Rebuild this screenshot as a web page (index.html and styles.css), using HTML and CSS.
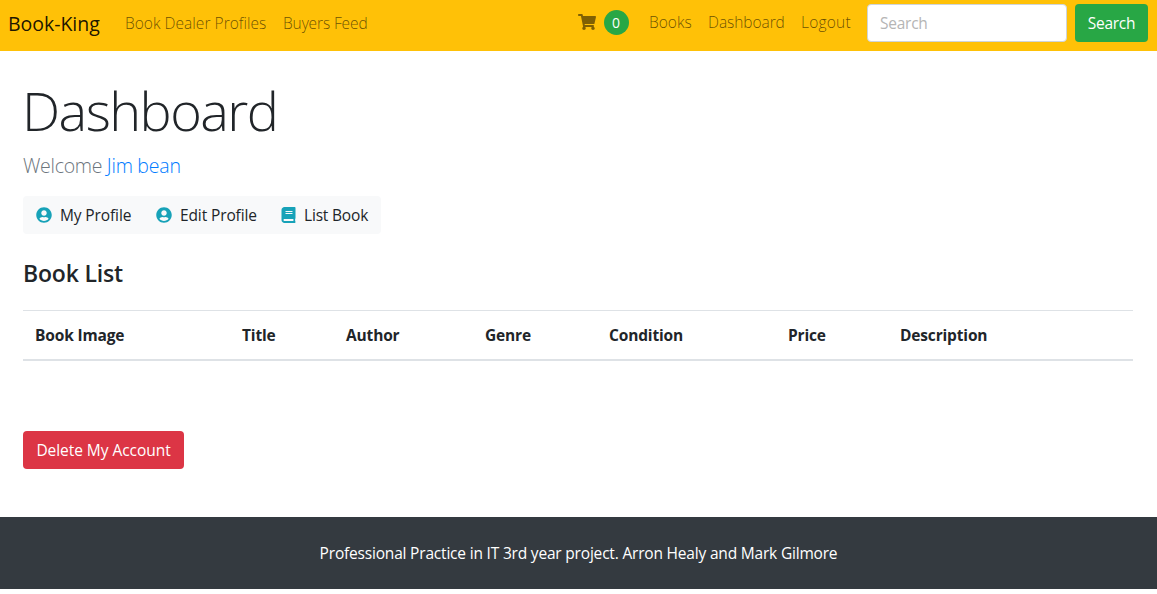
FILE: index.html
```html
<!DOCTYPE html>
<html lang="en">
<head>
<meta charset="utf-8">
<title>Book-King</title>
<link rel="stylesheet" href="styles.css">
</head>
<body>
<nav class="navbar">
  <a class="brand" href="#">Book-King</a>
  <a class="nav-link dealers" href="#">Book Dealer Profiles</a>
  <a class="nav-link buyers" href="#">Buyers Feed</a>
  <a class="cart" href="#">
    <svg class="cart-icon" viewBox="0 0 576 512"><path d="M528.1 301.3l47.3-208C578.800 78.300 567.400 64 552 64H159.200l-9.200-44.800C147.800 8 137.900 0 126.500 0H24C10.700 0 0 10.700 0 24v16c0 13.300 10.700 24 24 24h69.900l70.200 343.400C147.300 417.100 136 435.200 136 456c0 30.900 25.100 56 56 56s56-25.100 56-56c0-15.700-6.400-29.800-16.800-40h209.600C430.400 426.200 424 440.300 424 456c0 30.900 25.100 56 56 56s56-25.100 56-56c0-22.200-12.900-41.300-31.600-50.400l5.500-24.300c3.400-15-8-29.300-23.400-29.300H218.100l-6.500-32h293.100c11.200 0 20.900-7.800 23.400-18.700z"/></svg>
    <span class="badge">0</span>
  </a>
  <a class="nav-link books" href="#">Books</a>
  <a class="nav-link dash" href="#">Dashboard</a>
  <a class="nav-link logout" href="#">Logout</a>
  <input class="search-input" type="text" placeholder="Search">
  <button class="btn btn-success">Search</button>
</nav>
<main class="content">
  <h1 class="title">Dashboard</h1>
  <p class="lead">Welcome <a class="user" href="#">Jim bean</a></p>
  <div class="actions">
    <a class="action action-profile" href="#"><svg class="icon" viewBox="0 0 496 512"><path d="M248 8C111 8 0 119 0 256s111 248 248 248 248-111 248-248S385 8 248 8zm0 96c48.600 0 88 39.400 88 88s-39.400 88-88 88-88-39.400-88-88 39.400-88 88-88zm0 344c-58.700 0-111.300-26.600-146.500-68.200 18.800-35.400 55.600-59.800 98.500-59.800 2.400 0 4.800.4 7.100 1.100 13 4.200 26.600 6.900 40.900 6.900 14.300 0 28-2.700 40.900-6.900 2.300-.7 4.700-1.100 7.100-1.100 42.900 0 79.700 24.400 98.500 59.800C359.300 421.400 306.700 448 248 448z"/></svg>My Profile</a>
    <a class="action action-edit" href="#"><svg class="icon" viewBox="0 0 496 512"><path d="M248 8C111 8 0 119 0 256s111 248 248 248 248-111 248-248S385 8 248 8zm0 96c48.600 0 88 39.400 88 88s-39.400 88-88 88-88-39.400-88-88 39.400-88 88-88zm0 344c-58.700 0-111.300-26.600-146.500-68.200 18.800-35.400 55.600-59.800 98.500-59.800 2.400 0 4.800.4 7.100 1.100 13 4.200 26.600 6.900 40.900 6.900 14.300 0 28-2.700 40.900-6.900 2.300-.7 4.700-1.100 7.100-1.100 42.900 0 79.700 24.400 98.500 59.800C359.300 421.400 306.700 448 248 448z"/></svg>Edit Profile</a>
    <a class="action action-list" href="#"><svg class="icon book" viewBox="0 0 448 512"><path d="M448 360V24c0-13.300-10.700-24-24-24H96C43 0 0 43 0 96v320c0 53 43 96 96 96h328c13.300 0 24-10.700 24-24v-16c0-7.500-3.500-14.300-8.900-18.700-4.200-15.400-4.200-59.300 0-74.700 5.400-4.300 8.900-11.100 8.900-18.600zM128 134c0-3.300 2.700-6 6-6h212c3.300 0 6 2.700 6 6v20c0 3.300-2.700 6-6 6H134c-3.300 0-6-2.700-6-6v-20zm0 64c0-3.300 2.700-6 6-6h212c3.300 0 6 2.700 6 6v20c0 3.300-2.700 6-6 6H134c-3.300 0-6-2.700-6-6v-20zm253.400 250H96c-17.700 0-32-14.300-32-32 0-17.600 14.400-32 32-32h285.400c-1.900 17.100-1.900 46.900 0 64z"/></svg>List Book</a>
  </div>
  <h2 class="subtitle">Book List</h2>
  <table class="table">
    <colgroup><col class="c1"><col class="c2"><col class="c3"><col class="c4"><col class="c5"><col class="c6"><col></colgroup>
    <thead><tr><th>Book Image</th><th>Title</th><th>Author</th><th>Genre</th><th>Condition</th><th>Price</th><th>Description</th></tr></thead>
  </table>
  <button class="btn btn-danger">Delete My Account</button>
</main>
<footer class="footer">Professional Practice in IT 3rd year project. Arron Healy and Mark Gilmore</footer>
</body>
</html>
```
FILE: styles.css
```css
* { box-sizing: border-box; }
body {
  margin: 0;
  background: #fff;
  color: #212529;
  font: 400 16px/24px "Open Sans", "Noto Sans", sans-serif;
}
a { color: inherit; text-decoration: none; white-space: nowrap; }
.navbar {
  display: flex;
  align-items: flex-start;
  height: 51px;
  padding: 4px 9px 0 8px;
  background: #ffc107;
}
.brand { width: 109px; padding-top: 5px; font-size: 19.500px; line-height: 30px; letter-spacing: -.03px; color: rgba(0, 0, 0, .9); }
.nav-link { padding: 7px 8px; font-size: 15.500px; font-weight: 300; color: rgba(0, 0, 0, .6); }
.dealers { width: 158px; letter-spacing: .03px; }
.buyers { width: 100px; letter-spacing: -.12px; }
.cart { display: flex; margin-left: auto; width: 63px; gap: 8px; }
.cart-icon { width: 18px; height: 16px; margin-top: 10px; fill: rgba(0, 0, 0, .5); }
.badge { width: 25px; height: 25px; margin-top: 6px; padding-right: 1px; border-radius: 50%; background: #28a745; color: #fff; font-size: 14px; line-height: 25px; text-align: center; }
.books, .dash, .logout { padding-top: 6px; }
.books { width: 59px; }
.dash { width: 93px; letter-spacing: -.06px; }
.logout { width: 74px; letter-spacing: .22px; }
.search-input { width: 200px; height: 38px; margin-right: 8px; padding: 6px 12px; border: 1px solid #ced4da; border-radius: 4px; font: 400 15.500px/24px "Open Sans", sans-serif; letter-spacing: -.25px; }
.search-input::placeholder { color: #b5b5b5; }
.btn { height: 38px; padding: 0; border: 0; border-radius: 4px; color: #fff; font: 400 15.500px/38px "Open Sans", sans-serif; white-space: nowrap; }
.btn-success { width: 73px; background: #28a745; letter-spacing: -.3px; }
.btn-danger { display: block; width: 161px; margin-top: 70px; background: #dc3545; letter-spacing: -.05px; }
.content { height: 466px; padding: 26px 24px 0 23px; }
.title { margin: 0 0 0 -1px; font-size: 54px; font-weight: 300; line-height: 67px; letter-spacing: -1.550px; }
.lead { margin: 7px 0 15px; font-size: 19.500px; font-weight: 300; line-height: 30px; letter-spacing: -.28px; word-spacing: -.2px; color: #6c757d; }
.user { color: #007bff; letter-spacing: -.18px; }
.actions { display: flex; width: 358px; height: 38px; padding-left: 13px; border-radius: 4px; background: #f8f9fa; }
.action { display: flex; align-items: center; gap: 8px; font-size: 15.500px; letter-spacing: -.12px; }
.action-profile { width: 120px; }
.action-edit { width: 125px; }
.action-list { letter-spacing: -.18px; }
.icon { width: 16px; height: 16px; fill: #17a2b8; }
.book { width: 15px; }
.subtitle { margin: 25px 0 22px; font-size: 23px; font-weight: 600; line-height: 29px; letter-spacing: -.2px; }
.table { width: 100%; border-collapse: collapse; table-layout: fixed; }
.table th { height: 49px; padding: 1px 12px 0; border-top: 1px solid #dee2e6; border-bottom: 2px solid #dee2e6; text-align: left; font-size: 15.500px; font-weight: 700; letter-spacing: -.16px; }
.c1 { width: 207px; } .c2 { width: 104px; } .c3 { width: 139px; } .c4 { width: 124px; } .c5 { width: 179px; } .c6 { width: 112px; }
.footer { height: 72px; background: #343a40; color: #fff; text-align: center; line-height: 72px; font-size: 15.500px; letter-spacing: -.19px; }
```
